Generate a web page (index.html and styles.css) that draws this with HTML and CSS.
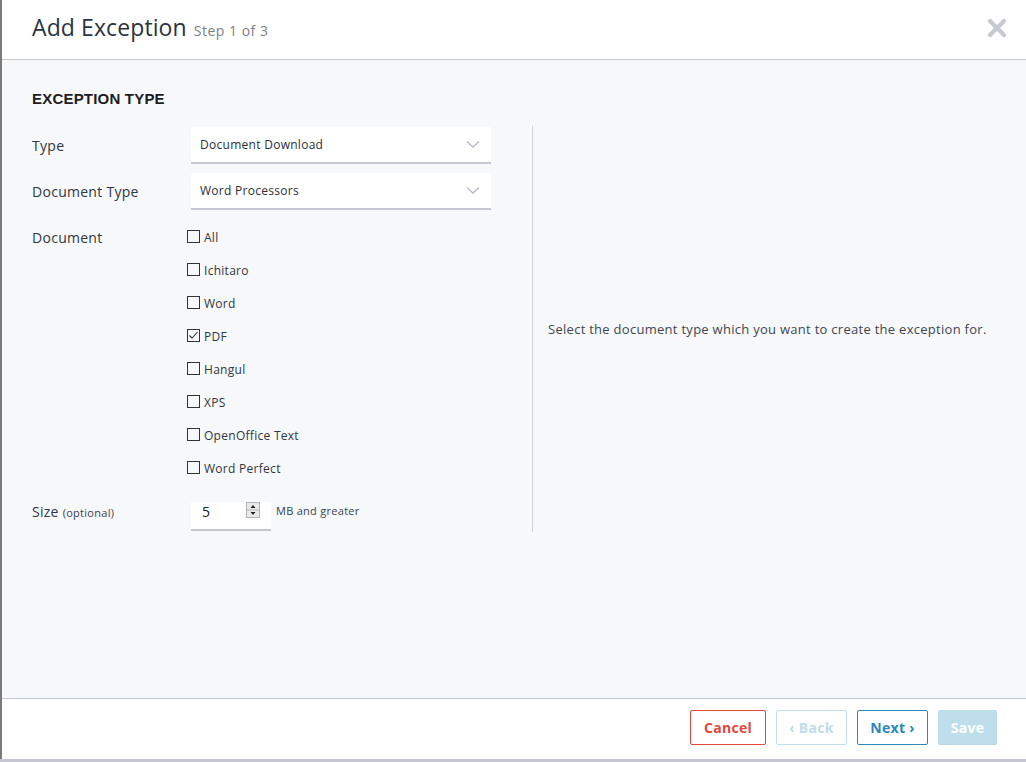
FILE: index.html
```html
<!DOCTYPE html>
<html>
<head>
<meta charset="utf-8">
<link rel="stylesheet" href="styles.css">
</head>
<body>
<div class="modal">
  <header class="head">
    <h1 class="title">Add Exception <span class="step">Step 1 of 3</span></h1>
    <button class="close" aria-label="Close">
      <svg width="20" height="20" viewBox="0 0 20 20"><path d="M3 3 L17 17 M17 3 L3 17" stroke="#c5c8d1" stroke-width="4.2" stroke-linecap="round"/></svg>
    </button>
  </header>
  <main class="body">
    <h2 class="section">EXCEPTION TYPE</h2>
    <div class="form">
      <div class="left">
        <div class="row">
          <div class="label">Type</div>
          <div class="select"><span>Document Download</span><svg class="chev" width="14" height="9" viewBox="0 0 14 9"><path d="M1 1.5 L7 7 L13 1.5" fill="none" stroke="#b9bdc7" stroke-width="1.4"/></svg></div>
        </div>
        <div class="row">
          <div class="label">Document Type</div>
          <div class="select"><span>Word Processors</span><svg class="chev" width="14" height="9" viewBox="0 0 14 9"><path d="M1 1.5 L7 7 L13 1.5" fill="none" stroke="#b9bdc7" stroke-width="1.4"/></svg></div>
        </div>
        <div class="row docrow">
          <div class="label doclabel">Document</div>
          <ul class="checks">
            <li><span class="box"></span>All</li>
            <li><span class="box"></span>Ichitaro</li>
            <li><span class="box"></span>Word</li>
            <li><span class="box checked"><svg width="11" height="11" viewBox="0 0 11 11"><path d="M1.5 5.5 L4 8 L9.5 2" fill="none" stroke="#333" stroke-width="1.1"/></svg></span>PDF</li>
            <li><span class="box"></span>Hangul</li>
            <li><span class="box"></span>XPS</li>
            <li><span class="box"></span>OpenOffice Text</li>
            <li><span class="box"></span>Word Perfect</li>
          </ul>
        </div>
        <div class="row sizerow">
          <div class="label sizelabel">Size <small>(optional)</small></div>
          <div class="sizewrap">
            <div class="number"><span>5</span>
              <span class="spin">
                <svg width="14" height="16" viewBox="0 0 14 16"><rect x="0.5" y="0.5" width="13" height="15" fill="#e9e9e9" stroke="#b5b5b5"/><line x1="1" y1="8" x2="13" y2="8" stroke="#b5b5b5"/><path d="M4.5 6 L7 3 L9.5 6 Z" fill="#222"/><path d="M4.5 10 L7 13 L9.5 10 Z" fill="#222"/></svg>
              </span>
            </div>
            <span class="unit">MB and greater</span>
          </div>
        </div>
      </div>
      <div class="right">
        <p>Select the document type which you want to create the exception for.</p>
      </div>
    </div>
  </main>
  <footer class="foot">
    <button class="btn cancel">Cancel</button>
    <button class="btn back">‹ Back</button>
    <button class="btn next">Next ›</button>
    <button class="btn save">Save</button>
  </footer>
</div>
</body>
</html>
```

FILE: styles.css
```css
* { box-sizing: border-box; }
html, body { margin: 0; padding: 0; }
body {
  width: 1026px;
  height: 762px;
  overflow: hidden;
  font-family: "Open Sans", "DejaVu Sans", sans-serif;
  color: #2f3742;
  background: #c3c6d0;
  letter-spacing: 0.28px;
}
.modal {
  width: 1026px;
  height: 759px;
  border-left: 2px solid #7b7b7b;
  display: flex;
  flex-direction: column;
  background: #fff;
}
.head {
  height: 60px;
  flex: none;
  border-bottom: 1px solid #c6c7c9;
  display: flex;
  align-items: center;
  justify-content: space-between;
  padding: 0 19px 0 30px;
  background: #fff;
}
.title {
  margin: 0;
  font-weight: 400;
  font-size: 23px;
  color: #2b3440;
  letter-spacing: 0.1px;
  padding-bottom: 6px;
}
.step {
  font-size: 14px;
  color: #7b8189;
  margin-left: 1px;
  letter-spacing: 0.5px;
}
.close {
  border: 0;
  background: none;
  padding: 0;
  width: 20px;
  height: 20px;
  margin-bottom: 3px;
}
.close svg { display: block; }
.body {
  flex: 1;
  background: #f7f8fa;
  border-bottom: 1px solid #c5cad2;
  padding: 0 0 0 30px;
}
.section {
  margin: 0;
  padding-top: 30px;
  height: 66px;
  font-family: "Liberation Sans", Arial, sans-serif;
  font-weight: 700;
  font-size: 15px;
  letter-spacing: 0.2px;
  color: #1d1d1f;
}
.form {
  display: flex;
}
.left {
  width: 501px;
  border-right: 1px solid #cfd2d8;
  padding-top: 1px;
  padding-bottom: 1px;
  display: flex;
  flex-direction: column;
  gap: 9px;
}
.row {
  display: grid;
  grid-template-columns: 159px 300px;
  align-items: center;
}
.label {
  font-size: 14px;
  color: #2f3742;
}
.label small {
  font-size: 11px;
  color: #3a424d;
}
.select {
  height: 37px;
  background: #fff;
  border-bottom: 2px solid #c5c8d0;
  border-radius: 2px 2px 0 0;
  display: flex;
  align-items: center;
  justify-content: space-between;
  padding: 0 11px 1px 9px;
  font-size: 12px;
  color: #2a2f36;
}
.chev { margin-top: 1px; }
.docrow {
  align-items: start;
  grid-template-columns: 155px 300px;
}
.doclabel {
  line-height: 33px;
  padding-top: 2px;
}
.checks {
  list-style: none;
  margin: 0;
  padding: 2px 0 0 0;
}
.checks li {
  height: 33px;
  display: flex;
  align-items: center;
  font-size: 12px;
  color: #2f3742;
}
.box {
  width: 13px;
  height: 13px;
  border: 1px solid #333;
  margin-right: 4px;
  margin-top: -3px;
  display: flex;
  align-items: center;
  justify-content: center;
}
.box svg { display: block; }
.sizerow {
  margin-top: 8px;
  align-items: start;
}
.sizelabel {
  line-height: 20px;
}
.sizewrap {
  display: flex;
  align-items: flex-start;
}
.number {
  width: 80px;
  height: 29px;
  background: #fff;
  border-bottom: 2px solid #c5c8d0;
  display: flex;
  align-items: flex-start;
  justify-content: space-between;
  padding: 0 11px 0 11px;
  font-size: 14px;
  line-height: 20px;
  color: #222;
}
.spin {
  display: block;
  height: 16px;
  margin-top: 0;
}
.spin svg { display: block; }
.unit {
  font-size: 11px;
  line-height: 18px;
  margin-left: 5px;
  color: #3a424d;
}
.right {
  flex: 1;
  display: flex;
  align-items: center;
  padding-left: 15px;
}
.right p {
  margin: 0;
  font-size: 13px;
  color: #3f4651;
}
.foot {
  height: 60px;
  flex: none;
  background: #fff;
  display: flex;
  justify-content: flex-end;
  align-items: flex-start;
  gap: 10px;
  padding: 11px 29px 0 0;
}
.btn {
  height: 35px;
  font-family: "Open Sans", sans-serif;
  font-weight: 700;
  font-size: 14px;
  letter-spacing: 0.3px;
  background: #fff;
  border: 1px solid;
  border-radius: 2px;
  padding: 0;
}
.cancel { width: 76px; color: #e1473b; border-color: #e1473b; }
.back { width: 71px; color: #bfdcea; border-color: #c2e0ec; }
.next { width: 71px; color: #2c88ba; border-color: #2c88ba; }
.save { width: 59px; color: #fff; background: #bedeeb; border-color: #bedeeb; border-bottom-color: #bcd6e3; }
```
